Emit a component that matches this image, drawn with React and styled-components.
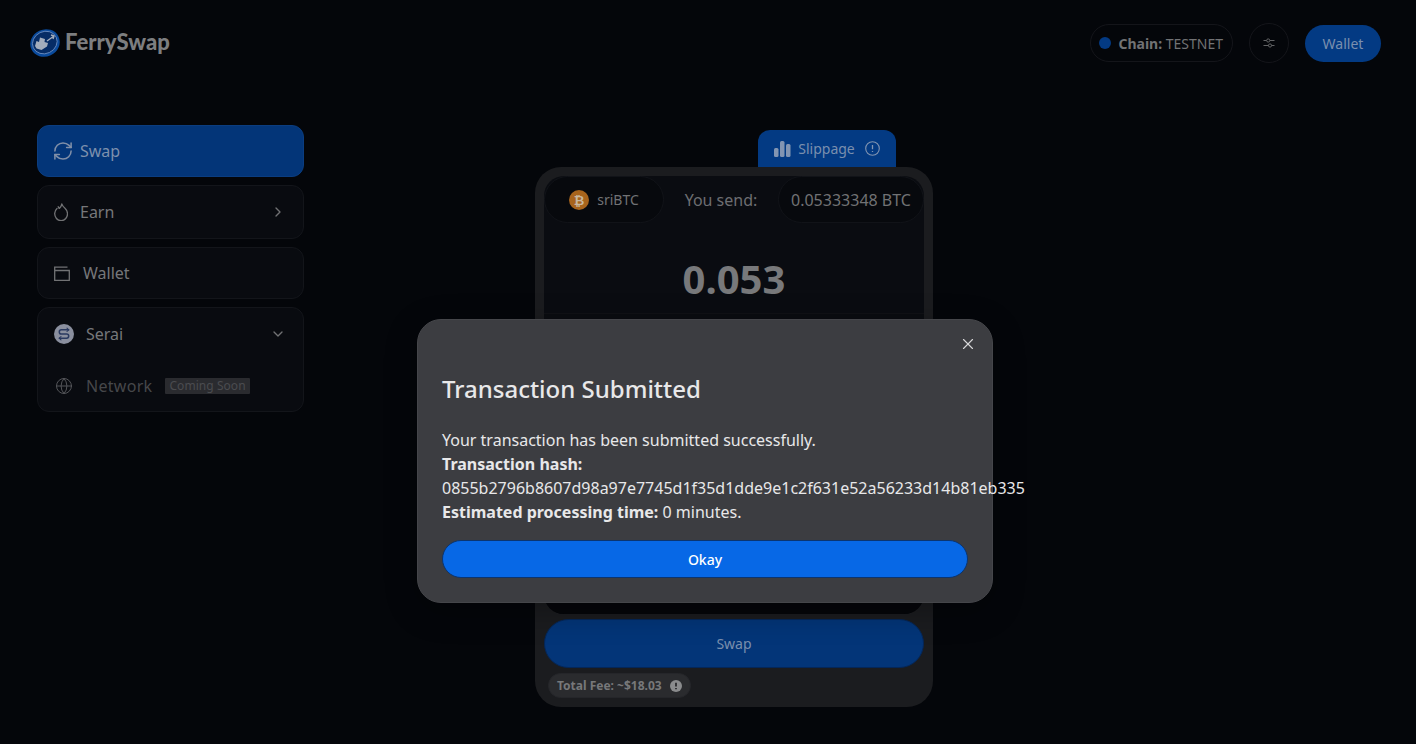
import React from 'react';
import styled, { createGlobalStyle } from 'styled-components';
import { ChevronRight, ChevronDown, Globe, X } from 'lucide-react';

const GlobalStyle = createGlobalStyle`
  html, body {
    margin: 0;
    height: 100%;
    background: #04060a;
    font-family: "Noto Sans", "Open Sans", sans-serif;
    overflow: hidden;
  }
  * { box-sizing: border-box; }
`;

const Page = styled.div`
  position: relative;
  width: 1416px;
  height: 744px;
  background: #04060a;
  overflow: hidden;
`;

const Header = styled.header`
  height: 86px;
  padding: 0 35px 0 29px;
  display: flex;
  align-items: center;
  justify-content: space-between;
`;

const Brand = styled.div`
  display: flex;
  align-items: center;
  gap: 4px;
  margin-top: -1px;
  font-family: "Lato", sans-serif;
  font-weight: 900;
  font-size: 22px;
  line-height: 26px;
  color: #7d7e80;
  span { margin-top: -2px; }
`;

const HeaderRight = styled.div`
  display: flex;
  align-items: center;
  gap: 16px;
`;

const ChainPill = styled.div`
  height: 38px;
  padding: 0 9px 0 8px;
  display: flex;
  align-items: center;
  gap: 7px;
  border: 1px solid #14151a;
  border-radius: 19px;
  font-size: 14px;
  color: #717274;
  b { font-weight: 700; }
`;

const Dot = styled.span`
  width: 12px;
  height: 12px;
  border-radius: 50%;
  background: #033a83;
`;

const RoundButton = styled.div`
  width: 40px;
  height: 40px;
  display: flex;
  align-items: center;
  justify-content: center;
  border: 1px solid #14151a;
  border-radius: 50%;
  color: #717274;
`;

const WalletButton = styled.div`
  width: 76px;
  height: 37px;
  margin-top: 1px;
  display: flex;
  align-items: center;
  justify-content: center;
  border-radius: 19px;
  background: #033a83;
  color: #7a8fae;
  font-size: 14px;
`;

const Main = styled.main`
  display: flex;
  align-items: flex-start;
  padding-left: 37px;
`;

const Sidebar = styled.nav`
  width: 267px;
  margin-top: 39px;
  display: flex;
  flex-direction: column;
  gap: 8px;
`;

const NavItem = styled.div`
  height: ${(p) => p.$h}px;
  padding: 0 17px 0 16px;
  display: flex;
  align-items: center;
  gap: ${(p) => p.$gap || 8}px;
  border: 1px solid ${(p) => (p.$active ? '#0b3d80' : '#13151a')};
  border-radius: 12px;
  background: ${(p) => (p.$active ? '#033578' : '#090b10')};
  color: ${(p) => (p.$active ? '#7d90ad' : '#76777a')};
  font-size: 16px;
`;

const NavGroup = styled.div`
  height: 105px;
  padding: 0 17px 0 16px;
  border: 1px solid #13151a;
  border-radius: 12px;
  background: #090b10;
  display: flex;
  flex-direction: column;
`;

const GroupRow = styled.div`
  height: ${(p) => p.$h}px;
  display: flex;
  align-items: center;
  gap: ${(p) => p.$gap}px;
  padding-left: ${(p) => (p.$muted ? 1 : 0)}px;
  padding-top: ${(p) => (p.$muted ? 1 : 0)}px;
  color: ${(p) => (p.$muted ? '#46474a' : '#76777a')};
  font-size: 16px;
  letter-spacing: ${(p) => (p.$muted ? 0.3 : 0)}px;
`;

const Push = styled.span`
  margin-left: auto;
  display: flex;
  color: #717274;
`;

const Soon = styled.span`
  padding: 0 4px;
  height: 16px;
  line-height: 16px;
  background: #2a2b2f;
  border-radius: 1px;
  color: #4b4c4f;
  font-size: 12px;
  letter-spacing: 0.05px;
`;

const Stage = styled.section`
  margin-left: 231px;
  width: 398px;
  margin-top: 44px;
  display: flex;
  flex-direction: column;
  align-items: flex-end;
`;

const SlippageTab = styled.div`
  width: 138px;
  height: 37px;
  margin-right: 37px;
  display: flex;
  align-items: center;
  justify-content: center;
  gap: 7px;
  background: #033a83;
  border-radius: 12px 12px 0 0;
  color: #7a8fae;
  font-size: 14px;
  span { margin-right: 3px; }
`;

const Card = styled.div`
  width: 398px;
  height: 540px;
  padding: 9px;
  border-radius: 26px;
  background: #1b1c1f;
  display: flex;
  flex-direction: column;
`;

const InnerPanel = styled.div`
  height: 438px;
  border-radius: 20px;
  background: #0a0c11;
  display: flex;
  flex-direction: column;
`;

const SendRow = styled.div`
  height: 47px;
  display: flex;
  align-items: center;
  justify-content: space-between;
  color: #6d6e71;
  font-size: 16px;
`;

const TokenPill = styled.div`
  width: ${(p) => p.$w}px;
  height: 47px;
  display: flex;
  align-items: center;
  justify-content: center;
  gap: 8px;
  border: 1px solid #111318;
  border-radius: 24px;
  background: #07090d;
  font-size: ${(p) => p.$size}px;
  color: #717274;
`;

const Amount = styled.div`
  margin-top: 30px;
  text-align: center;
  font-size: 40px;
  line-height: 52px;
  font-weight: 700;
  color: #78797b;
`;

const Divider = styled.div`
  margin-top: 8px;
  height: 1px;
  background: #101216;
`;

const BottomBlock = styled.div`
  margin-top: auto;
  height: 60px;
  border-radius: 0 0 20px 20px;
  background: #05060a;
`;

const SwapButton = styled.div`
  height: 49px;
  margin-top: 5px;
  display: flex;
  align-items: center;
  justify-content: center;
  border: 1px solid #04275a;
  border-radius: 25px;
  background: #033578;
  color: #7a8fae;
  font-size: 14px;
`;

const FeePill = styled.div`
  align-self: flex-start;
  height: 25px;
  margin: 5px 0 0 4px;
  padding: 0 8px;
  display: flex;
  align-items: center;
  gap: 8px;
  border-radius: 13px;
  border: 1px solid #25262a;
  background: #2a2b2e;
  color: #77787a;
  font-size: 12px;
  font-weight: 700;
`;

const Modal = styled.div`
  position: absolute;
  left: 417px;
  top: 319px;
  width: 576px;
  height: 284px;
  padding: 57px 24px 0;
  border-radius: 24px;
  border: 1px solid #45464a;
  background: #3c3d41;
  color: #e8e8e9;
  box-shadow: 0 8px 32px rgba(0, 0, 0, 0.3);
`;

const CloseButton = styled.div`
  position: absolute;
  top: 15px;
  right: 15px;
  display: flex;
  color: #d8d8d9;
`;

const Title = styled.h2`
  margin: 0 0 27px;
  font-size: 24px;
  line-height: 24px;
  font-weight: 500;
  color: #e8e8e9;
`;

const Body = styled.div`
  font-size: 16px;
  line-height: 24px;
  white-space: nowrap;
  b { font-weight: 700; }
`;

const OkayButton = styled.div`
  margin-top: 16px;
  height: 38px;
  display: flex;
  align-items: center;
  justify-content: center;
  border: 1px solid #0b3570;
  border-radius: 19px;
  background: #0768e6;
  color: #fff;
  font-size: 14px;
  font-weight: 500;
`;

const LogoIcon = () => (
  <svg width="32" height="30" viewBox="0 0 32 30">
    <ellipse cx="16" cy="15" rx="15" ry="13.500" fill="#0a4a9c" transform="rotate(-25 16 15)" />
    <ellipse cx="16" cy="14.500" rx="12.600" ry="11" fill="#062c66" stroke="#6f90c2" strokeWidth="0.800" transform="rotate(-25 16 15)" />
    <path d="M6 18l1.500-5 2.500 1 1-4.500 5 1.500-.5 3 3.500 1-1 3.500-5.500 3.500-5-1.500z" fill="#a3adbd" />
    <path d="M18 13l7-5M22 7l3 1-1 3" stroke="#a3adbd" strokeWidth="1.400" fill="none" />
  </svg>
);

const SwapIcon = () => (
  <svg width="18" height="18" viewBox="2 2 20 20" fill="none" stroke="#808fa8" strokeWidth="1.700" strokeLinecap="round" strokeLinejoin="round">
    <path d="M3 12a9 9 0 0 1 9-9 9.750 9.750 0 0 1 6.740 2.740L21 8" />
    <path d="M21 3v5h-5" />
    <path d="M21 12a9 9 0 0 1-9 9 9.750 9.750 0 0 1-6.740-2.740L3 16" />
    <path d="M8 16H3v5" />
  </svg>
);

const FlameIcon = () => (
  <svg width="14" height="18" viewBox="0 0 14 18" fill="none" stroke="#717274" strokeWidth="1.300" strokeLinecap="round" strokeLinejoin="round">
    <path d="M3 5.500A6.400 6.900 0 1 0 11.200 5.500C9.700 4.200 8.300 2.800 7.800 .8C7.500 2.600 6.700 4.300 5.300 5.400C4.700 4.900 4.400 4.300 4.200 3.600" />
  </svg>
);

const WalletIcon = () => (
  <svg width="16" height="15" viewBox="0 0 16 15" fill="none" stroke="#717274" strokeWidth="1.300">
    <path d="M.7 4.500h14.600v9.800H.7zM.7 4.500V1.200h12.800" />
  </svg>
);

const SeraiIcon = () => (
  <svg width="20" height="20" viewBox="0 0 20 20" fill="none">
    <circle cx="10" cy="10" r="10" fill="#8a8f9e" />
    <path d="M14.600 5.800H7.400a2.100 2.100 0 0 0 0 4.200h5.200a2.100 2.100 0 0 1 0 4.200H5.400" stroke="#2a3a60" strokeWidth="1.500" strokeLinecap="round" />
    <path d="M13 4.200l1.800 1.600-1.800 1.600M7 12.600l-1.800 1.600L7 15.800" stroke="#2a3a60" strokeWidth="1.100" strokeLinecap="round" strokeLinejoin="round" />
  </svg>
);

const SlidersIcon = () => (
  <svg width="12" height="10" viewBox="0 0 12 10" fill="none" stroke="#626365" strokeWidth="1">
    <path d="M.5 2.500h3M7 2.500h4.500M.5 7.500h5M8.500 7.500h3" />
    <circle cx="5.200" cy="2.500" r="1.600" />
    <circle cx="7" cy="7.500" r="1.600" />
  </svg>
);

const BarsIcon = () => (
  <svg width="17" height="16" viewBox="0 0 17 16" fill="#8295b2">
    <rect x="0" y="7" width="4.500" height="9" rx="1.500" />
    <rect x="6" y="0" width="4.500" height="16" rx="1.500" />
    <rect x="12" y="3" width="4.500" height="13" rx="1.500" />
  </svg>
);

const InfoOutline = () => (
  <svg width="15" height="15" viewBox="0 0 15 15" fill="none" stroke="#8295b2" strokeWidth="1.100">
    <circle cx="7.500" cy="7.500" r="6.800" />
    <path d="M7.500 4v4.200M7.500 10v1" strokeWidth="1.300" />
  </svg>
);

const InfoFilled = () => (
  <svg width="12" height="12" viewBox="0 0 12 12">
    <circle cx="6" cy="6" r="6" fill="#8a8b8d" />
    <path d="M6 2.800v3.700M6 8v1.200" stroke="#2a2b2e" strokeWidth="1.800" />
  </svg>
);

const BitcoinIcon = () => (
  <svg width="20" height="20" viewBox="0 0 20 20">
    <circle cx="10" cy="10" r="10" fill="#a8641c" />
    <text x="10" y="14.500" textAnchor="middle" fontSize="13" fontWeight="700" fontFamily="'DejaVu Sans', sans-serif" fill="#c9b79f">₿</text>
  </svg>
);

const App = () => (
  <Page>
    <GlobalStyle />
    <Header>
      <Brand>
        <LogoIcon />
        <span>FerrySwap</span>
      </Brand>
      <HeaderRight>
        <ChainPill>
          <Dot />
          <span><b>Chain:</b> TESTNET</span>
        </ChainPill>
        <RoundButton><SlidersIcon /></RoundButton>
        <WalletButton>Wallet</WalletButton>
      </HeaderRight>
    </Header>
    <Main>
      <Sidebar>
        <NavItem $h={52} $active>
          <SwapIcon />
          <span>Swap</span>
        </NavItem>
        <NavItem $h={54} $gap={12}>
          <FlameIcon />
          <span>Earn</span>
          <Push><ChevronRight size={16} /></Push>
        </NavItem>
        <NavItem $h={52} $gap={13}>
          <WalletIcon />
          <span>Wallet</span>
        </NavItem>
        <NavGroup>
          <GroupRow $h={52} $gap={12}>
            <SeraiIcon />
            <span>Serai</span>
            <Push><ChevronDown size={16} /></Push>
          </GroupRow>
          <GroupRow $h={52} $gap={13} $muted>
            <Globe size={18} color="#55565a" strokeWidth={1.300} />
            <span>Network</span>
            <Soon>Coming Soon</Soon>
          </GroupRow>
        </NavGroup>
      </Sidebar>
      <Stage>
        <SlippageTab>
          <BarsIcon />
          <span>Slippage</span>
          <InfoOutline />
        </SlippageTab>
        <Card>
          <InnerPanel>
            <SendRow>
              <TokenPill $w={120} $size={14}>
                <BitcoinIcon />
                <span>sriBTC</span>
              </TokenPill>
              <span>You send:</span>
              <TokenPill $w={146} $size={16}>0.05333348 BTC</TokenPill>
            </SendRow>
            <Amount>0.053</Amount>
            <Divider />
            <BottomBlock />
          </InnerPanel>
          <SwapButton>Swap</SwapButton>
          <FeePill>
            <span>Total Fee: ~$18.03</span>
            <InfoFilled />
          </FeePill>
        </Card>
      </Stage>
    </Main>
    <Modal>
      <CloseButton><X size={18} strokeWidth={1.500} /></CloseButton>
      <Title>Transaction Submitted</Title>
      <Body>
        <div>Your transaction has been submitted successfully.</div>
        <div><b>Transaction hash:</b></div>
        <div>0855b2796b8607d98a97e7745d1f35d1dde9e1c2f631e52a56233d14b81eb335</div>
        <div><b>Estimated processing time:</b> 0 minutes.</div>
      </Body>
      <OkayButton>Okay</OkayButton>
    </Modal>
  </Page>
);

export default App;
